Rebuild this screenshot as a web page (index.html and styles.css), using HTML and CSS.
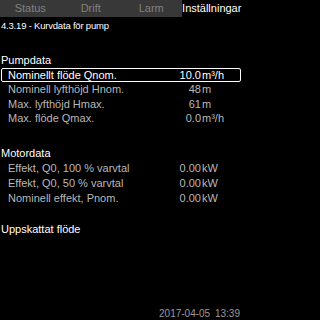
FILE: index.html
```html
<!DOCTYPE html>
<html lang="sv">
<head>
<meta charset="utf-8">
<title>Kurvdata för pump</title>
<link rel="stylesheet" href="styles.css">
</head>
<body>
<div class="screen">
  <div class="tabs">
    <div class="tab">Status</div>
    <div class="tab">Drift</div>
    <div class="tab">Larm</div>
    <div class="tab active">Inställningar</div>
  </div>
  <div class="title">4.3.19 - Kurvdata för pump</div>

  <div class="section first">Pumpdata</div>
  <div class="list pump">
    <div class="row sel"><span class="label">Nominellt flöde Qnom.</span><span class="num">10.0</span><span class="unit">m³/h</span></div>
    <div class="row"><span class="label">Nominell lyfthöjd Hnom.</span><span class="num">48</span><span class="unit">m</span></div>
    <div class="row"><span class="label">Max. lyfthöjd Hmax.</span><span class="num">61</span><span class="unit">m</span></div>
    <div class="row"><span class="label">Max. flöde Qmax.</span><span class="num">0.0</span><span class="unit">m³/h</span></div>
  </div>

  <div class="section motor">Motordata</div>
  <div class="list motorlist">
    <div class="row"><span class="label">Effekt, Q0, 100 % varvtal</span><span class="num">0.00</span><span class="unit">kW</span></div>
    <div class="row"><span class="label">Effekt, Q0, 50 % varvtal</span><span class="num">0.00</span><span class="unit">kW</span></div>
    <div class="row"><span class="label">Nominell effekt, Pnom.</span><span class="num">0.00</span><span class="unit">kW</span></div>
  </div>

  <div class="section est">Uppskattat flöde</div>

  <div class="datetime">2017-04-05 13:39</div>
</div>
</body>
</html>
```
FILE: styles.css
```css
html, body {
  margin: 0;
  padding: 0;
  background: #000;
}
.screen {
  width: 242px;
  height: 320px;
  display: flex;
  flex-direction: column;
  font-family: "Liberation Sans", Arial, sans-serif;
  font-size: 11px;
  color: #fff;
  overflow: hidden;
}
.tabs {
  display: grid;
  grid-template-columns: repeat(4, 1fr);
  height: 17px;
  background: #383838;
}
.tab {
  text-align: center;
  line-height: 17px;
  color: #808080;
  white-space: nowrap;
}
.tab.active {
  background: #000;
  color: #fff;
}
.title {
  margin: 2.5px 0 0 1px;
  font-size: 9.5px;
  line-height: 12px;
  letter-spacing: -0.2px;
}
.section {
  padding-left: 1px;
  line-height: 15px;
}
.section.first {
  margin-top: 21.5px;
  line-height: 14.5px;
}
.section.motor {
  margin-top: 20.5px;
}
.section.est {
  margin-top: 16px;
}
.list {
  display: flex;
  flex-direction: column;
}
.row {
  display: grid;
  grid-template-columns: 1fr 40px 38px;
  column-gap: 1px;
  margin: 0 1px;
  padding-left: 6px;
  border: 1px solid transparent;
  border-radius: 2px;
  box-sizing: border-box;
  color: #b8b8b8;
  white-space: nowrap;
}
.pump .row {
  height: 14.5px;
  line-height: 12.5px;
}
.motorlist .row {
  height: 15px;
  line-height: 13px;
}
.row.sel {
  border-color: #fff;
  color: #fff;
}
.num {
  text-align: right;
}
.unit {
  text-align: left;
}
.datetime {
  margin-top: auto;
  align-self: flex-end;
  padding: 0 2px 0 0;
  font-size: 10px;
  line-height: 12px;
  word-spacing: 2px;
  color: #9a9a9a;
}
```
